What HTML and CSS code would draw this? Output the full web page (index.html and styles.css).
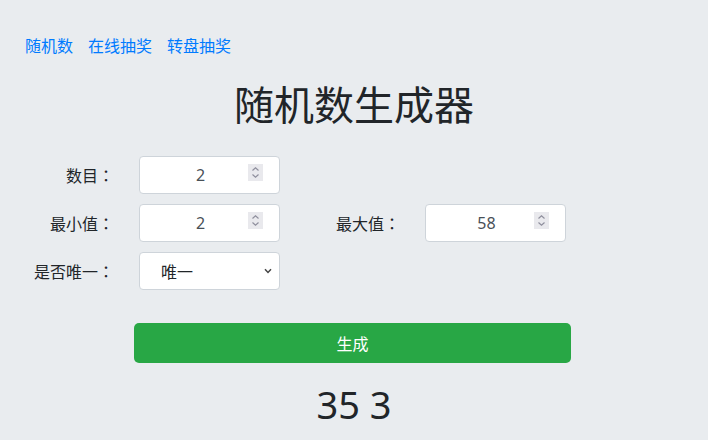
FILE: index.html
```html
<!DOCTYPE html>
<html lang="zh-CN">
<head>
<meta charset="utf-8">
<title>随机数生成器</title>
<link rel="stylesheet" href="styles.css">
</head>
<body>
<div class="page">
  <nav class="nav">
    <a href="#">随机数</a>
    <a href="#">在线抽奖</a>
    <a href="#">转盘抽奖</a>
  </nav>
  <h1 class="title">随机数生成器</h1>
  <form class="form">
    <label class="label">数目<span class="colon" lang="zh-TW">：</span></label>
    <span class="field">
      <input class="control" type="number" value="2">
      <svg class="spin" width="15" height="17" viewBox="0 0 15 17"><rect width="15" height="17" fill="#e9e9ed"/><path d="M4.5 6.5 L7.5 3.8 L10.5 6.5" fill="none" stroke="#8f8f9d" stroke-width="1.2"/><path d="M4.5 10.5 L7.5 13.2 L10.5 10.5" fill="none" stroke="#8f8f9d" stroke-width="1.2"/></svg>
    </span>
    <span></span><span></span>

    <label class="label">最小值<span class="colon" lang="zh-TW">：</span></label>
    <span class="field">
      <input class="control" type="number" value="2">
      <svg class="spin" width="15" height="17" viewBox="0 0 15 17"><rect width="15" height="17" fill="#e9e9ed"/><path d="M4.5 6.5 L7.5 3.8 L10.5 6.5" fill="none" stroke="#8f8f9d" stroke-width="1.2"/><path d="M4.5 10.5 L7.5 13.2 L10.5 10.5" fill="none" stroke="#8f8f9d" stroke-width="1.2"/></svg>
    </span>
    <label class="label">最大值<span class="colon" lang="zh-TW">：</span></label>
    <span class="field">
      <input class="control" type="number" value="58">
      <svg class="spin" width="15" height="17" viewBox="0 0 15 17"><rect width="15" height="17" fill="#e9e9ed"/><path d="M4.5 6.5 L7.5 3.8 L10.5 6.5" fill="none" stroke="#8f8f9d" stroke-width="1.2"/><path d="M4.5 10.5 L7.5 13.2 L10.5 10.5" fill="none" stroke="#8f8f9d" stroke-width="1.2"/></svg>
    </span>

    <label class="label">是否唯一<span class="colon" lang="zh-TW">：</span></label>
    <span class="field">
      <select class="control select">
        <option>唯一</option>
        <option>可重复</option>
      </select>
      <svg class="arrow" width="8" height="6" viewBox="0 0 8 6"><path d="M1 1.2 L4 4.4 L7 1.2" fill="none" stroke="#444" stroke-width="1.5"/></svg>
    </span>
    <span></span><span></span>
  </form>
  <button class="btn" type="button">生成</button>
  <div class="result">35 3</div>
</div>
</body>
</html>
```

FILE: styles.css
```css
html, body {
  margin: 0;
  padding: 0;
  background: #e9ecef;
}
body {
  font-family: "Noto Sans", "Noto Sans CJK SC", sans-serif;
  color: #212529;
  font-size: 16px;
}
.page {
  padding: 33px 25px 0 25px;
}
.nav {
  display: flex;
  gap: 15px;
  line-height: 24px;
  height: 24px;
}
.nav a {
  color: #007bff;
  text-decoration: none;
  font-family: "Noto Sans CJK SC", sans-serif;
  font-size: 16px;
}
.title {
  margin: 22px 0 0 0;
  text-align: center;
  font-family: "Noto Sans CJK SC", sans-serif;
  font-weight: 400;
  font-size: 40px;
  line-height: 48px;
  color: #212529;
}
.form {
  margin-top: 29px;
  display: grid;
  grid-template-columns: 89px 141px 95px 141px;
  column-gap: 25px;
  row-gap: 10px;
  align-items: center;
}
.label {
  text-align: right;
  font-family: "Noto Sans CJK SC", sans-serif;
  font-size: 16px;
  line-height: 24px;
  color: #212529;
  white-space: nowrap;
}
.colon {
  font-family: "Noto Sans CJK TC", "Noto Sans CJK SC", sans-serif;
}
.field {
  position: relative;
  display: block;
  width: 141px;
  height: 38px;
}
.control {
  box-sizing: border-box;
  display: block;
  width: 141px;
  height: 38px;
  padding: 0 12px;
  border: 1px solid #ced4da;
  border-radius: 4px;
  background: #fff;
  font-family: "Noto Sans", "Noto Sans CJK SC", sans-serif;
  font-size: 16px;
  color: #495057;
  text-align: center;
  margin: 0;
  -moz-appearance: textfield;
  appearance: textfield;
}
.control::-webkit-inner-spin-button,
.control::-webkit-outer-spin-button {
  -webkit-appearance: none;
  margin: 0;
}
.control[type="number"] {
  padding-right: 30px;
}
.spin {
  position: absolute;
  top: 8px;
  right: 17px;
  display: block;
}
.select {
  -webkit-appearance: none;
  appearance: none;
  text-align: left;
  padding-left: 21px;
  font-family: "Noto Sans CJK SC", sans-serif;
  color: #212529;
}
.arrow {
  position: absolute;
  top: 16px;
  right: 8px;
  display: block;
}
.btn {
  display: block;
  margin: 33px 0 0 109px;
  width: 437px;
  height: 40px;
  border: none;
  border-radius: 5px;
  background: #28a745;
  color: #fff;
  font-family: "Noto Sans CJK SC", sans-serif;
  font-size: 16px;
}
.result {
  margin-top: 18px;
  text-align: center;
  font-family: "Noto Sans", sans-serif;
  font-size: 38px;
  line-height: 46px;
  color: #212529;
}
```
